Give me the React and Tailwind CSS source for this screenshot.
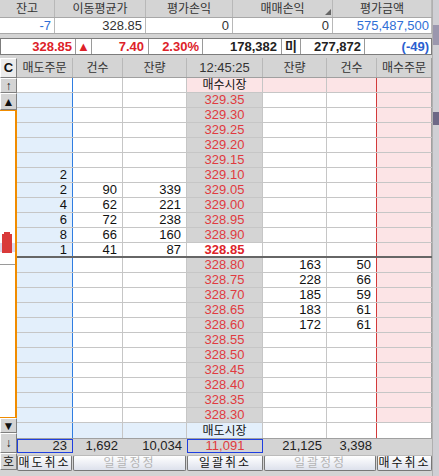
import React from "react"

const NUM = "font-['Liberation_Sans_Narrow','Liberation_Sans','Noto_Sans_CJK_KR',sans-serif]"
const SANS = "font-['Liberation_Sans','Noto_Sans_CJK_KR',sans-serif]"

const prices = Array.from({ length: 22 }, (_, i) => ((32935 - i * 5) / 100).toFixed(2))

const sell = {
  "329.10": ["2", "", ""],
  "329.05": ["2", "90", "339"],
  "329.00": ["4", "62", "221"],
  "328.95": ["6", "72", "238"],
  "328.90": ["8", "66", "160"],
  "328.85": ["1", "41", "87"],
}

const buy = {
  "328.80": ["163", "50"],
  "328.75": ["228", "66"],
  "328.70": ["185", "59"],
  "328.65": ["183", "61"],
  "328.60": ["172", "61"],
}

const W = ["w-[56px]", "w-[50px]", "w-[64px]", "w-[76px]", "w-[64px]", "w-[50px]", "w-[55px]"]
const L = [
  "border-r-[#2f7de1]",
  "border-r-[#c6c6c6]",
  "border-r-[#c6c6c6]",
  "border-r-[#c6c6c6]",
  "border-r-[#c6c6c6]",
  "border-r-[#d23a3a]",
  "border-r-[#a0a0a0]",
]

function Cell({ i, bg, align = "justify-end pr-[5px]", className = "", children }) {
  return (
    <div className={`${W[i]} ${L[i]} ${bg} ${align} ${className} h-full border-r flex items-center overflow-hidden`}>
      {children}
    </div>
  )
}

function Btn3d({ className = "", children }) {
  return (
    <div
      className={`${className} flex items-center justify-center bg-[#d4d4d4] border border-t-white border-l-white border-b-[#808080] border-r-[#808080]`}
    >
      {children}
    </div>
  )
}

function ActionBtn({ w, disabled, children }) {
  return (
    <div
      className={`${w} h-full flex items-center justify-center rounded-[2px] border border-[#777] border-t-[#bbb] bg-gradient-to-b from-white to-[#dde1ec] tracking-[2px] ${
        disabled ? "text-[#b4b4b4]" : "text-[#111]"
      }`}
    >
      {children}
    </div>
  )
}

export default function App() {
  return (
    <div className={`w-[439px] h-[476px] overflow-hidden bg-[#d4d4d4] flex ${SANS} text-[12px] text-[#111]`}>
      <div className="w-[432px] flex flex-col">
        {/* 잔고 헤더 */}
        <div className="flex h-[17px] text-[#333]">
          <div className="w-[55px] border-r border-[#b8b8b8] flex items-center justify-center">잔고</div>
          <div className="w-[91px] border-r border-[#b8b8b8] flex items-center justify-center">이동평균가</div>
          <div className="w-[87px] border-r border-[#b8b8b8] flex items-center justify-center">평가손익</div>
          <div className="w-[100px] border-r border-[#b8b8b8] flex items-center justify-center relative">
            매매손익
            <div className="absolute right-[1px] bottom-[2px] w-0 h-0 border-l-[6px] border-l-transparent border-b-[6px] border-b-[#666]" />
          </div>
          <div className="w-[99px] border-r border-[#b8b8b8] flex items-center justify-center">평가금액</div>
        </div>
        <div className={`flex h-[17px] bg-white border-y border-[#a8a8a8] ${NUM} text-[13px]`}>
          <div className="w-[55px] border-r border-[#b8b8b8] flex items-center justify-end pr-[3px] text-[#2f6fd6]">-7</div>
          <div className="w-[91px] border-r border-[#b8b8b8] flex items-center justify-end pr-[3px] text-[#333]">328.85</div>
          <div className="w-[87px] border-r border-[#b8b8b8] flex items-center justify-end pr-[3px] text-[#333]">0</div>
          <div className="w-[100px] border-r border-[#b8b8b8] flex items-center justify-end pr-[3px] text-[#333]">0</div>
          <div className="w-[99px] border-r border-[#b8b8b8] flex items-center justify-end pr-[2px] text-[#2f6fd6]">575,487,500</div>
        </div>
        <div className="h-[4px]" />

        {/* 현재가 */}
        <div className={`flex h-[17px] bg-white border border-[#7c7c7c] font-bold text-[13px]`}>
          <div className="w-[75px] border-r border-[#9a9a9a] flex items-center justify-end pr-[3px] text-[#dd2229]">328.85</div>
          <div className="w-[16px] border-r border-[#9a9a9a] flex items-center justify-center text-[#dd2229] text-[13px]">▲</div>
          <div className="w-[57px] border-r border-[#9a9a9a] flex items-center justify-end pr-[4px] text-[#dd2229]">7.40</div>
          <div className="w-[54px] border-r border-[#9a9a9a] flex items-center justify-end pr-[3px] text-[#dd2229]">2.30%</div>
          <div className="w-[79px] border-r border-[#9a9a9a] flex items-center justify-end pr-[4px] text-[#222]">178,382</div>
          <div className="w-[19px] border-r border-[#9a9a9a] flex items-center justify-center text-[#222]">미</div>
          <div className="w-[64px] border-r border-[#9a9a9a] flex items-center justify-end pr-[3px] text-[#222]">277,872</div>
          <div className="flex-1 flex items-center justify-end pr-[2px] text-[#2a5fd0]">(-49)</div>
        </div>
        <div className="h-[3px]" />

        {/* 호가창 */}
        <div className="flex h-[412px]">
          {/* 왼쪽 세로 도구 */}
          <div className="w-[17px] flex flex-col">
            <Btn3d className="h-[20px] bg-[#ececec] font-bold text-[13px]">C</Btn3d>
            <Btn3d className="h-[15px] text-[12px]">↑</Btn3d>
            <Btn3d className="h-[17px] text-[12px]">▲</Btn3d>
            <div className="h-[308px] bg-white border-t border-b border-r-2 border-[#f08c00] relative">
              <div className="absolute left-0 top-[132px] w-[15px] h-[9px] bg-[#dcd9ee]" />
              <div className="absolute left-[4px] top-[121px] w-[6px] h-[3px] bg-[#d93a3a]" />
              <div className="absolute left-[2px] top-[123px] w-[10px] h-[19px] bg-[#d93a3a]" />
              <div className="absolute left-0 top-[153px] w-[15px] h-px bg-[#9a9a9a]" />
            </div>
            <Btn3d className="h-[15px] text-[12px]">▼</Btn3d>
            <Btn3d className="h-[20px] text-[12px]">↓</Btn3d>
            <Btn3d className="h-[17px] text-[12px]">호</Btn3d>
          </div>

          <div className="w-[415px] flex flex-col">
            {/* 헤더 */}
            <div className="flex h-[20px] text-[#333] border-b border-[#a0a0a0]">
              <div className="w-[56px] border-r border-[#b8b8b8] flex items-center justify-center">매도주문</div>
              <div className="w-[50px] border-r border-[#b8b8b8] flex items-center justify-center">건수</div>
              <div className="w-[64px] border-r border-[#b8b8b8] flex items-center justify-center">잔량</div>
              <div className="w-[76px] border-r border-[#b8b8b8] flex items-center justify-center text-[13px]">12:45:25</div>
              <div className="w-[64px] border-r border-[#b8b8b8] flex items-center justify-center">잔량</div>
              <div className="w-[50px] border-r border-[#b8b8b8] flex items-center justify-center">건수</div>
              <div className="w-[55px] border-r border-[#a0a0a0] flex items-center justify-center">매수주문</div>
            </div>

            {/* 본문 */}
            <div className={`flex flex-col ${NUM} text-[13px]`}>
              <div className="flex h-[15px] border-b border-[#c6c6c6]">
                <Cell i={0} bg="bg-white" />
                <Cell i={1} bg="bg-white" />
                <Cell i={2} bg="bg-white" />
                <Cell i={3} bg="bg-[#fce4e6]" align="justify-center" className={`${SANS} text-[12px]`}>
                  매수시장
                </Cell>
                <Cell i={4} bg="bg-[#fce4e6]" />
                <Cell i={5} bg="bg-[#fce4e6]" />
                <Cell i={6} bg="bg-[#fce4e6]" />
              </div>

              {prices.map((p) => {
                const s = sell[p] || ["", "", ""]
                const b = buy[p] || ["", ""]
                const cur = p === "328.85"
                return (
                  <div
                    key={p}
                    className={`flex h-[15px] border-b ${cur ? "border-b-2 border-[#666]" : "border-[#c6c6c6]"}`}
                  >
                    <Cell i={0} bg="bg-[#e3effb]">{s[0]}</Cell>
                    <Cell i={1} bg="bg-white">{s[1]}</Cell>
                    <Cell i={2} bg="bg-white">{s[2]}</Cell>
                    <Cell
                      i={3}
                      bg={cur ? "bg-white" : "bg-[#d4d4d4]"}
                      align="justify-center"
                      className={cur ? `${SANS} font-bold text-[#dd2229]` : "text-[#e03a40]"}
                    >
                      {p}
                    </Cell>
                    <Cell i={4} bg="bg-white">{b[0]}</Cell>
                    <Cell i={5} bg="bg-white">{b[1]}</Cell>
                    <Cell i={6} bg="bg-[#fce4e6]" />
                  </div>
                )
              })}

              <div className="flex h-[15px]">
                <Cell i={0} bg="bg-[#e3effb]" />
                <Cell i={1} bg="bg-[#e3effb]" />
                <Cell i={2} bg="bg-[#e3effb]" />
                <Cell i={3} bg="bg-[#e3effb]" align="justify-center" className={`${SANS} text-[12px]`}>
                  매도시장
                </Cell>
                <Cell i={4} bg="bg-white" />
                <Cell i={5} bg="bg-white" />
                <Cell i={6} bg="bg-white" />
              </div>
            </div>

            {/* 합계 */}
            <div className={`flex h-[15px] bg-[#d4d4d4] border-t border-[#a0a0a0] ${NUM} text-[13px] text-[#222]`}>
              <div className="w-[56px] h-full flex items-center justify-end pr-[5px] border border-[#1f3fe0]">23</div>
              <div className="w-[50px] h-full flex items-center justify-end pr-[5px]">1,692</div>
              <div className="w-[64px] h-full flex items-center justify-end pr-[5px]">10,034</div>
              <div className="w-[76px] h-full flex items-center justify-center border border-[#1f3fe0] text-[#e03a40]">11,091</div>
              <div className="w-[64px] h-full flex items-center justify-end pr-[5px]">21,125</div>
              <div className="w-[50px] h-full flex items-center justify-end pr-[5px]">3,398</div>
              <div className="w-[55px] h-full" />
            </div>

            {/* 버튼 */}
            <div className="flex h-[16px] mt-[2px] gap-[1px] text-[12px]">
              <ActionBtn w="w-[55px]">매도취소</ActionBtn>
              <ActionBtn w="w-[113px]" disabled>일괄정정</ActionBtn>
              <ActionBtn w="w-[76px]">일괄취소</ActionBtn>
              <ActionBtn w="w-[112px]" disabled>일괄정정</ActionBtn>
              <ActionBtn w="w-[55px]">매수취소</ActionBtn>
            </div>
          </div>
        </div>
      </div>

      {/* 오른쪽 스크롤 가장자리 */}
      <div className="w-[7px] h-full bg-[#cfcfd4] border-l border-[#b0b0b0] flex flex-col">
        <div className="h-[25px]" />
        <div className="h-[20px] bg-[#9a97ae]" />
        <div className="h-[67px]" />
        <div className="h-[13px] bg-[#6c6886]" />
      </div>
    </div>
  )
}
